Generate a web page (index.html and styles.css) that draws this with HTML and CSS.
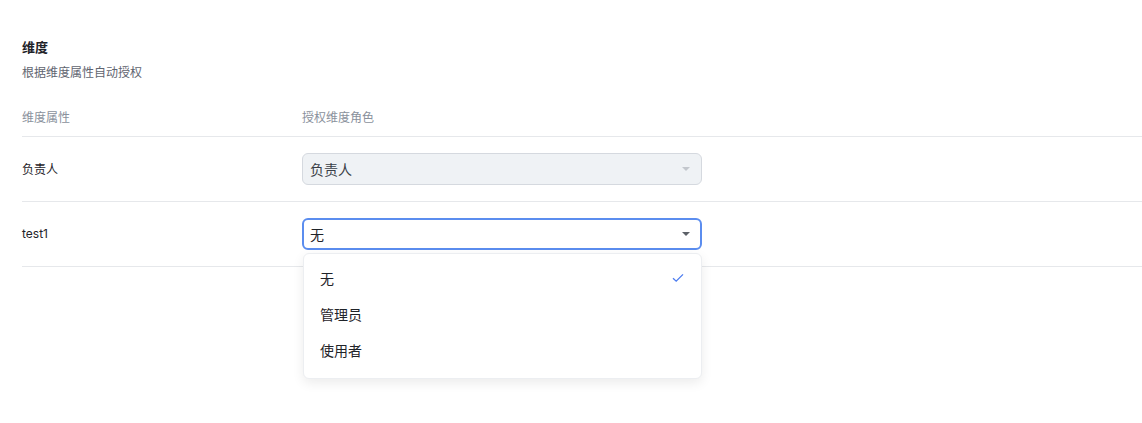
FILE: index.html
```html
<!DOCTYPE html>
<html lang="zh-CN">
<head>
<meta charset="utf-8">
<title>维度</title>
<link rel="stylesheet" href="styles.css">
</head>
<body>
<div class="page">
  <div class="title">维度</div>
  <div class="subtitle">根据维度属性自动授权</div>
  <div class="table">
    <div class="row head">
      <div class="cell c1">维度属性</div>
      <div class="cell c2">授权维度角色</div>
    </div>
    <div class="row">
      <div class="cell c1 label">负责人</div>
      <div class="cell c2">
        <div class="select disabled">
          <span class="value">负责人</span>
          <span class="caret"></span>
        </div>
      </div>
    </div>
    <div class="row">
      <div class="cell c1 label">test1</div>
      <div class="cell c2">
        <div class="select-wrap">
          <div class="select focused">
            <span class="value">无</span>
            <span class="caret"></span>
          </div>
          <ul class="menu">
            <li class="item selected"><span>无</span>
              <svg class="check" width="12" height="10" viewBox="0 0 12 10"><path d="M1 5.2 L4.2 8.2 L11 1.4" fill="none" stroke="#4c7cf0" stroke-width="1.3"/></svg>
            </li>
            <li class="item"><span>管理员</span></li>
            <li class="item"><span>使用者</span></li>
          </ul>
        </div>
      </div>
    </div>
  </div>
</div>
</body>
</html>
```
FILE: styles.css
```css
* { box-sizing: border-box; }
html, body { margin: 0; background: #fff; }
html { height: 100%; }
body {
  min-height: 100%;
  font-family: "Inter", "Liberation Sans", "Noto Sans CJK SC", sans-serif;
  color: #1f2329;
}
.page { padding: 36px 0 0 22px; min-height: 423px; }
.title {
  font-size: 13px;
  font-weight: 700;
  line-height: 22px;
  color: #1f2329;
}
.subtitle {
  margin-top: 4px;
  font-size: 12px;
  line-height: 22px;
  color: #5f6570;
}
.table { margin-top: 12px; }
.row {
  display: flex;
  align-items: center;
  height: 65px;
  border-bottom: 1px solid #e6e8eb;
}
.row.head {
  height: 41px;
  font-size: 12px;
  color: #8a919c;
}
.c1 { width: 280px; flex: none; }
.c2 { flex: 1; }
.label { font-size: 12px; color: #1f2329; padding-bottom: 1px; }
.select-wrap { position: relative; width: 400px; }
.select {
  position: relative;
  width: 400px;
  height: 32px;
  border: 1px solid #d5d9df;
  border-radius: 6px;
  display: flex;
  align-items: center;
  justify-content: space-between;
  padding: 0 11px 0 7px;
  font-size: 14px;
  color: #1f2329;
  background: #fff;
}
.select.disabled {
  background: #eff2f5;
  color: #3a3f47;
}
.select.disabled .caret { border-top-color: #c3c7cd; }
.select.focused {
  border: 2px solid #5b8def;
  padding: 0 10px 0 6px;
}
.caret {
  width: 0;
  height: 0;
  border-left: 4px solid transparent;
  border-right: 4px solid transparent;
  border-top: 4px solid #5c6168;
}
.menu {
  position: absolute;
  z-index: 10;
  top: calc(100% + 3px);
  left: 1px;
  right: 0;
  margin: 0;
  padding: 6px 0 10px;
  list-style: none;
  background: #fff;
  border: 1px solid #eceef1;
  border-radius: 6px;
  box-shadow: 0 4px 12px rgba(0, 0, 0, 0.08);
}
.item {
  height: 36px;
  display: flex;
  align-items: center;
  justify-content: space-between;
  padding: 0 17px 0 16px;
  font-size: 14px;
  color: #1f2329;
}
.check { display: block; }
```
